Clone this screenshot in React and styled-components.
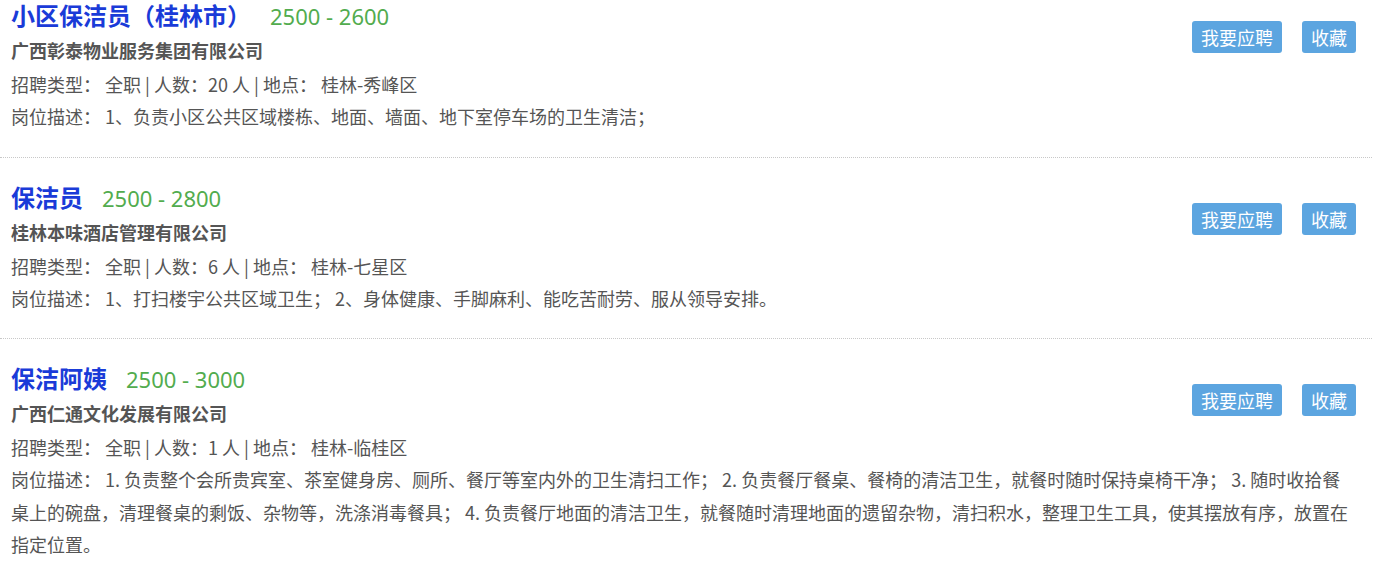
import React from "react";
import styled, { createGlobalStyle } from "styled-components";

const GlobalStyle = createGlobalStyle`
  body {
    margin: 0;
    background: #fff;
    font-family: "Microsoft YaHei", "Noto Sans CJK SC", "Noto Sans", sans-serif;
  }
`;

const jobs = [
  {
    title: "小区保洁员（桂林市）",
    salary: "2500 - 2600",
    company: "广西彰泰物业服务集团有限公司",
    count: 20,
    place: "桂林-秀峰区",
    desc: "1、负责小区公共区域楼栋、地面、墙面、地下室停车场的卫生清洁；",
  },
  {
    title: "保洁员",
    salary: "2500 - 2800",
    company: "桂林本味酒店管理有限公司",
    count: 6,
    place: "桂林-七星区",
    desc: "1、打扫楼宇公共区域卫生； 2、身体健康、手脚麻利、能吃苦耐劳、服从领导安排。",
  },
  {
    title: "保洁阿姨",
    salary: "2500 - 3000",
    company: "广西仁通文化发展有限公司",
    count: 1,
    place: "桂林-临桂区",
    desc: "1. 负责整个会所贵宾室、茶室健身房、厕所、餐厅等室内外的卫生清扫工作； 2. 负责餐厅餐桌、餐椅的清洁卫生，就餐时随时保持桌椅干净； 3. 随时收拾餐桌上的碗盘，清理餐桌的剩饭、杂物等，洗涤消毒餐具； 4. 负责餐厅地面的清洁卫生，就餐随时清理地面的遗留杂物，清扫积水，整理卫生工具，使其摆放有序，放置在指定位置。",
  },
];

/**
 * List wrapper.
 */
const List = styled.div`
  width: 1372px;
`;

/**
 * One job entry, separated by a dotted line.
 */
const Item = styled.div`
  padding: 24px 16px 24px 11px;
  border-bottom: 1px dotted #c8c8c8;

  &:first-child {
    padding-top: 0;
  }

  &:last-child {
    border-bottom: none;
  }
`;

const Actions = styled.div`
  float: right;
  display: flex;
  gap: 20px;
  margin-top: 21px;
`;

const Button = styled.button`
  height: 32px;
  padding: 0 9px;
  border: none;
  border-radius: 3px;
  background-color: #5ca5e0;
  color: #fff;
  font-family: inherit;
  font-size: 18px;
  line-height: 32px;
  cursor: pointer;
`;

const TitleRow = styled.div`
  display: flex;
  align-items: baseline;
  height: 34px;
  line-height: 30px;
  white-space: nowrap;
`;

const Title = styled.span`
  font-size: 24px;
  font-weight: bold;
  color: #1a3bd8;
`;

const Salary = styled.span`
  margin-left: 19px;
  font-family: "Noto Sans", "Noto Sans CJK SC", sans-serif;
  font-size: 22px;
  color: #52ac4e;
`;

const Company = styled.div`
  height: 34px;
  font-size: 18px;
  font-weight: bold;
  line-height: 33px;
  color: #555;
`;

const Line = styled.div`
  font-size: 18px;
  line-height: ${(props) => (props.tall ? "32.5px" : "32px")};
  color: #555;
`;

const JobItem = ({ job }) => (
  <Item>
    <Actions>
      <Button>我要应聘</Button>
      <Button>收藏</Button>
    </Actions>
    <TitleRow>
      <Title>{job.title}</Title>
      <Salary>{job.salary}</Salary>
    </TitleRow>
    <Company>{job.company}</Company>
    <Line>
      招聘类型： 全职 | 人数：{job.count} 人 | 地点： {job.place}
    </Line>
    <Line tall>岗位描述： {job.desc}</Line>
  </Item>
);

export default function App() {
  return (
    <>
      <GlobalStyle />
      <List>
        {jobs.map((job) => (
          <JobItem key={job.title} job={job} />
        ))}
      </List>
    </>
  );
}
